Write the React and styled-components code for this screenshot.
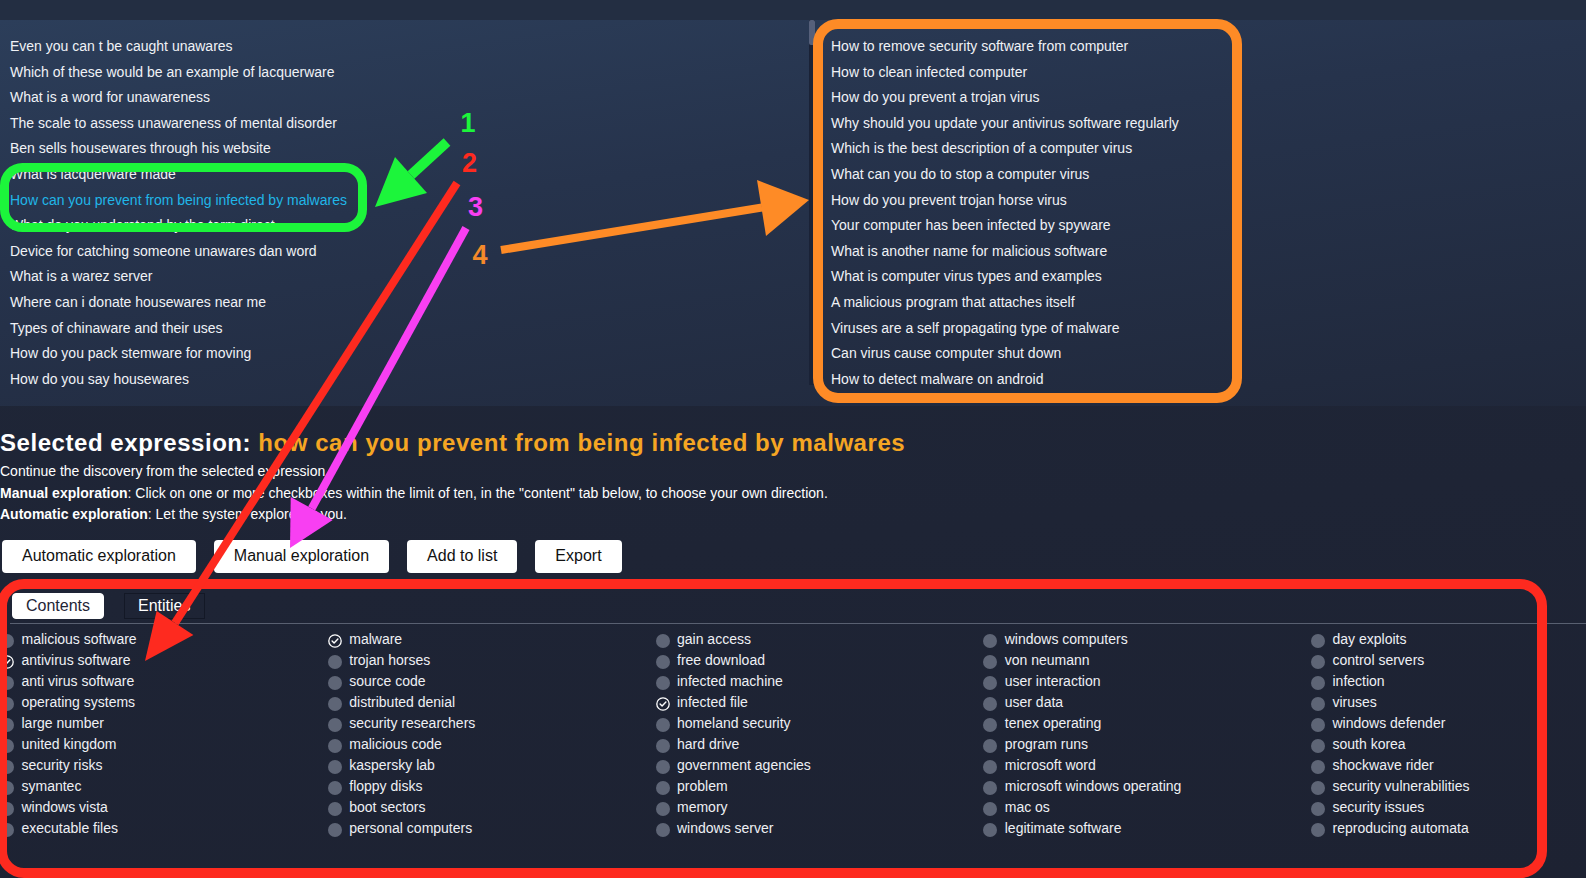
import React from "react";
import styled, { createGlobalStyle } from "styled-components";

const Global = createGlobalStyle`
  html, body {
    margin: 0;
    padding: 0;
    background: #1e2434;
    overflow: hidden;
  }
  body {
    font-family: "Liberation Sans", Arial, Helvetica, sans-serif;
    color: #eef0f4;
  }
`;

// Page frame
const Page = styled.div`
  position: relative;
  width: 1586px;
  height: 878px;
  overflow: hidden;
  background: linear-gradient(175deg, #20283a 0%, #1e2435 60%, #1d2232 100%);
`;

const TopBar = styled.div`
  height: 20px;
  background: #232e42;
`;

// Suggestion panel (two lists)
const Suggestions = styled.div`
  height: 386px;
  display: grid;
  grid-template-columns: 809px 1fr;
  background: linear-gradient(172deg, #2c3e5a 0%, #26334c 40%, #20283b 100%);
`;

const List = styled.ul`
  list-style: none;
  margin: 0;
  padding: 14px 0 0 ${(p) => p.$indent || 10}px;
`;

const ListItem = styled.li`
  font-size: 14px;
  line-height: 25.6px;
  white-space: nowrap;
  color: ${(p) => (p.$active ? "#20b6e8" : "#f0f2f6")};
`;

const RightCol = styled.div`
  display: flex;
  align-items: flex-start;
`;

const ScrollTrack = styled.div`
  width: 6px;
  height: 365px;
  background: #1a2236;
`;

const ScrollThumb = styled.div`
  width: 6px;
  height: 25px;
  border-radius: 2px;
  background: #56607a;
`;

// Lower section
const Main = styled.div`
  padding: 23px 0 0 0;
`;

const Heading = styled.h2`
  margin: 0;
  font-size: 24px;
  line-height: 28px;
  font-weight: 700;
  letter-spacing: 0.55px;
  color: #ffffff;
`;

const Accent = styled.span`
  color: #f5a623;
`;

const Desc = styled.div`
  margin-top: 4px;
  font-size: 14px;
  line-height: 21.6px;
  color: #ffffff;
`;

const Buttons = styled.div`
  display: flex;
  gap: 18px;
  margin-top: 14px;
  padding-left: 2px;
`;

const Button = styled.button`
  height: 33px;
  padding: 0 20px;
  border: none;
  border-radius: 4px;
  background: #ffffff;
  color: #111111;
  font-family: inherit;
  font-size: 16px;
`;

const TabBar = styled.div`
  display: flex;
  align-items: flex-end;
  gap: 20px;
  margin: 20px 0 0 10px;
  padding: 0 0 4px 2px;
  border-bottom: 1px solid #596071;
`;

const Tab = styled.div`
  height: 24px;
  padding: 0 13px;
  display: flex;
  align-items: center;
  font-size: 16px;
  border-radius: ${(p) => (p.$active ? "4px" : "0")};
  background: ${(p) => (p.$active ? "#ffffff" : "transparent")};
  color: ${(p) => (p.$active ? "#1f2536" : "#ffffff")};
  border: 1px solid ${(p) => (p.$active ? "#ffffff" : "#131826")};
`;

const Grid = styled.div`
  display: grid;
  grid-template-columns: repeat(4, 327.75px) 1fr;
  margin-top: 5px;
`;

const Column = styled.div`
  display: flex;
  flex-direction: column;
`;

const Item = styled.div`
  display: flex;
  align-items: center;
  gap: 7.5px;
  height: 21.03px;
  font-size: 14px;
  white-space: nowrap;
  color: #eef0f4;
`;

const Dot = styled.span`
  flex: none;
  width: 14px;
  height: 14px;
  margin-top: 3px;
  border-radius: 50%;
  background: #5e6576;
`;

const CheckWrap = styled.span`
  flex: none;
  width: 14px;
  height: 14px;
  margin-top: 3px;
  display: flex;
`;

// Annotation layer over the screenshot
const Overlay = styled.svg`
  position: absolute;
  left: 0;
  top: 0;
  pointer-events: none;
`;

const Check = () => (
  <CheckWrap>
    <svg width="14" height="14" viewBox="0 0 14 14">
      <circle cx="7" cy="7" r="6.2" fill="none" stroke="#ffffff" strokeWidth="1.3" />
      <path d="M4.1 7.1 L6.1 9.1 L9.9 5.1" fill="none" stroke="#ffffff" strokeWidth="1.4" strokeLinecap="round" strokeLinejoin="round" />
    </svg>
  </CheckWrap>
);

const leftList = [
  "Even you can t be caught unawares",
  "Which of these would be an example of lacquerware",
  "What is a word for unawareness",
  "The scale to assess unawareness of mental disorder",
  "Ben sells housewares through his website",
  "What is lacquerware made",
  "How can you prevent from being infected by malwares",
  "What do you understand by the term direct",
  "Device for catching someone unawares dan word",
  "What is a warez server",
  "Where can i donate housewares near me",
  "Types of chinaware and their uses",
  "How do you pack stemware for moving",
  "How do you say housewares",
];

const rightList = [
  "How to remove security software from computer",
  "How to clean infected computer",
  "How do you prevent a trojan virus",
  "Why should you update your antivirus software regularly",
  "Which is the best description of a computer virus",
  "What can you do to stop a computer virus",
  "How do you prevent trojan horse virus",
  "Your computer has been infected by spyware",
  "What is another name for malicious software",
  "What is computer virus types and examples",
  "A malicious program that attaches itself",
  "Viruses are a self propagating type of malware",
  "Can virus cause computer shut down",
  "How to detect malware on android",
];

const columns = [
  ["malicious software", "*antivirus software", "anti virus software", "operating systems", "large number", "united kingdom", "security risks", "symantec", "windows vista", "executable files"],
  ["*malware", "trojan horses", "source code", "distributed denial", "security researchers", "malicious code", "kaspersky lab", "floppy disks", "boot sectors", "personal computers"],
  ["gain access", "free download", "infected machine", "*infected file", "homeland security", "hard drive", "government agencies", "problem", "memory", "windows server"],
  ["windows computers", "von neumann", "user interaction", "user data", "tenex operating", "program runs", "microsoft word", "microsoft windows operating", "mac os", "legitimate software"],
  ["day exploits", "control servers", "infection", "viruses", "windows defender", "south korea", "shockwave rider", "security vulnerabilities", "security issues", "reproducing automata"],
];

const Arrow = ({ from, base, tip, left, right, color, width }) => (
  <g>
    <line x1={from[0]} y1={from[1]} x2={base[0]} y2={base[1]} stroke={color} strokeWidth={width} />
    <polygon points={`${tip[0]},${tip[1]} ${left[0]},${left[1]} ${right[0]},${right[1]}`} fill={color} />
  </g>
);

const Label = ({ x, y, color, children }) => (
  <text x={x} y={y} fill={color} fontSize="27" fontWeight="700" textAnchor="middle" fontFamily="Liberation Sans, Arial, sans-serif">
    {children}
  </text>
);

const App = () => {
  return (
    <Page>
      <Global />
      <TopBar />
      <Suggestions>
        <List>
          {leftList.map((t, i) => (
            <ListItem key={i} $active={i === 6}>{t}</ListItem>
          ))}
        </List>
        <RightCol>
          <ScrollTrack>
            <ScrollThumb />
          </ScrollTrack>
          <List $indent={16}>
            {rightList.map((t, i) => (
              <ListItem key={i}>{t}</ListItem>
            ))}
          </List>
        </RightCol>
      </Suggestions>

      <Main>
        <Heading>
          Selected expression: <Accent>how can you prevent from being infected by malwares</Accent>
        </Heading>
        <Desc>
          <div>Continue the discovery from the selected expression</div>
          <div>
            <b>Manual exploration</b>: Click on one or more checkboxes within the limit of ten, in the "content" tab below, to choose your own direction.
          </div>
          <div>
            <b>Automatic exploration</b>: Let the system explore for you.
          </div>
        </Desc>
        <Buttons>
          <Button>Automatic exploration</Button>
          <Button>Manual exploration</Button>
          <Button>Add to list</Button>
          <Button>Export</Button>
        </Buttons>
        <TabBar>
          <Tab $active>Contents</Tab>
          <Tab>Entities</Tab>
        </TabBar>
        <Grid>
          {columns.map((col, ci) => (
            <Column key={ci}>
              {col.map((raw) => {
                const checked = raw.startsWith("*");
                const label = checked ? raw.slice(1) : raw;
                return (
                  <Item key={label}>
                    {checked ? <Check /> : <Dot />}
                    {label}
                  </Item>
                );
              })}
            </Column>
          ))}
        </Grid>
      </Main>

      <Overlay width="1586" height="878" viewBox="0 0 1586 878">
        {/* boxes */}
        <rect x="4.5" y="167.5" width="358" height="60" rx="18" fill="none" stroke="#1cf53b" strokeWidth="9" />
        <rect x="818" y="24" width="419" height="374" rx="20" fill="none" stroke="#fe8b26" strokeWidth="10" />
        <rect x="2" y="584" width="1540" height="289" rx="22" fill="none" stroke="#fe2a1f" strokeWidth="10" />

        {/* arrows */}
        <Arrow from={[447, 142]} base={[411, 175]} tip={[375, 207]} left={[395, 157]} right={[427, 193]} color="#1cf53b" width="10" />
        <Arrow from={[457, 183]} base={[175, 623]} tip={[145, 661]} left={[156.6, 611]} right={[193.4, 635]} color="#fe2a1f" width="8" />
        <Arrow from={[466, 228]} base={[311.7, 508.5]} tip={[290, 548]} left={[290.7, 497]} right={[332.7, 520]} color="#f83ff2" width="8" />
        <Arrow from={[501, 250]} base={[762, 207.5]} tip={[809, 200]} left={[757, 180]} right={[766, 236]} color="#fe8b26" width="8" />

        {/* numbers */}
        <Label x="468" y="132" color="#1cf53b">1</Label>
        <Label x="469.5" y="172" color="#fe2a1f">2</Label>
        <Label x="475.5" y="215.5" color="#f83ff2">3</Label>
        <Label x="480" y="263.5" color="#f58a2a">4</Label>
      </Overlay>
    </Page>
  );
};

export default App;
